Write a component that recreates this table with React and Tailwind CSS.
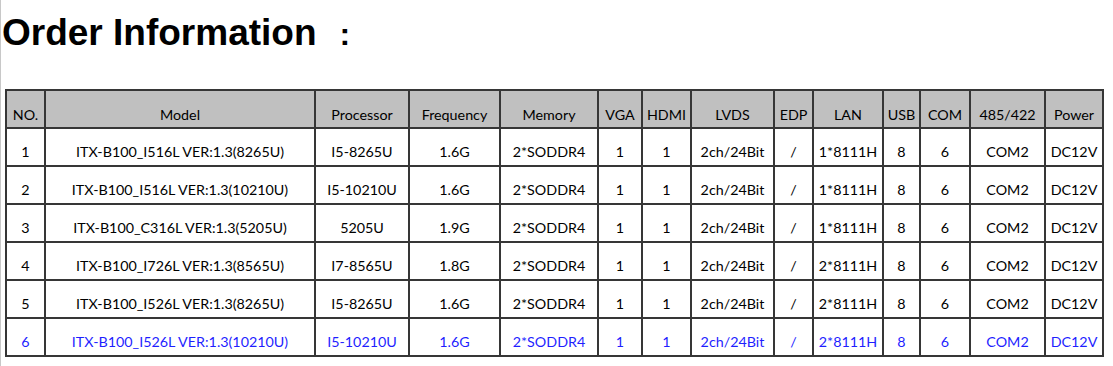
import React from "react";

const cols = [39, 270, 94, 91, 98, 44, 49, 83, 39, 70, 37, 50, 75, 58];
const headers = ["NO.", "Model", "Processor", "Frequency", "Memory", "VGA", "HDMI", "LVDS", "EDP", "LAN", "USB", "COM", "485/422", "Power"];
const rows = [
  ["1", "ITX-B100_I516L VER:1.3(8265U)", "I5-8265U", "1.6G", "2*SODDR4", "1", "1", "2ch/24Bit", "/", "1*8111H", "8", "6", "COM2", "DC12V"],
  ["2", "ITX-B100_I516L VER:1.3(10210U)", "I5-10210U", "1.6G", "2*SODDR4", "1", "1", "2ch/24Bit", "/", "1*8111H", "8", "6", "COM2", "DC12V"],
  ["3", "ITX-B100_C316L VER:1.3(5205U)", "5205U", "1.9G", "2*SODDR4", "1", "1", "2ch/24Bit", "/", "1*8111H", "8", "6", "COM2", "DC12V"],
  ["4", "ITX-B100_I726L VER:1.3(8565U)", "I7-8565U", "1.8G", "2*SODDR4", "1", "1", "2ch/24Bit", "/", "2*8111H", "8", "6", "COM2", "DC12V"],
  ["5", "ITX-B100_I526L VER:1.3(8265U)", "I5-8265U", "1.6G", "2*SODDR4", "1", "1", "2ch/24Bit", "/", "2*8111H", "8", "6", "COM2", "DC12V"],
  ["6", "ITX-B100_I526L VER:1.3(10210U)", "I5-10210U", "1.6G", "2*SODDR4", "1", "1", "2ch/24Bit", "/", "2*8111H", "8", "6", "COM2", "DC12V"],
];

export default function App() {
  return (
    <div className="w-[1113px] h-[366px] bg-white border-l border-[#c8c8c8] overflow-hidden">
      <div
        className="pt-[14px] pl-[1px] h-[51px] text-[37px] leading-[37px] font-bold text-black flex items-baseline"
        style={{ fontFamily: '"Liberation Sans", Arial, sans-serif' }}
      >
        <span>Order Information</span>
        <span className="ml-[23px] text-[32px]">:</span>
      </div>
      <table
        className="mt-[38px] ml-[4px] table-fixed border-collapse text-[14.3px] leading-[16px]"
        style={{ fontFamily: 'Lato, "Liberation Sans", sans-serif', width: "1099px" }}
      >
        <colgroup>
          {cols.map((w, i) => (
            <col key={i} style={{ width: `${w}px` }} />
          ))}
        </colgroup>
        <thead>
          <tr className="h-[38px] bg-[#c0c0c0]">
            {headers.map((h, i) => (
              <th
                key={i}
                className="border-2 border-[#363636] font-normal text-black text-center align-bottom pb-[4px] px-0 whitespace-nowrap"
              >
                {h}
              </th>
            ))}
          </tr>
        </thead>
        <tbody>
          {rows.map((r, ri) => (
            <tr key={ri} className="h-[38px]">
              {r.map((c, ci) => (
                <td
                  key={ci}
                  className={
                    "border-2 border-[#363636] text-center align-bottom pb-[5px] px-0 whitespace-nowrap " +
                    (ri === 5 ? "text-[#1f1fff]" : "text-black")
                  }
                >
                  {c}
                </td>
              ))}
            </tr>
          ))}
        </tbody>
      </table>
    </div>
  );
}
